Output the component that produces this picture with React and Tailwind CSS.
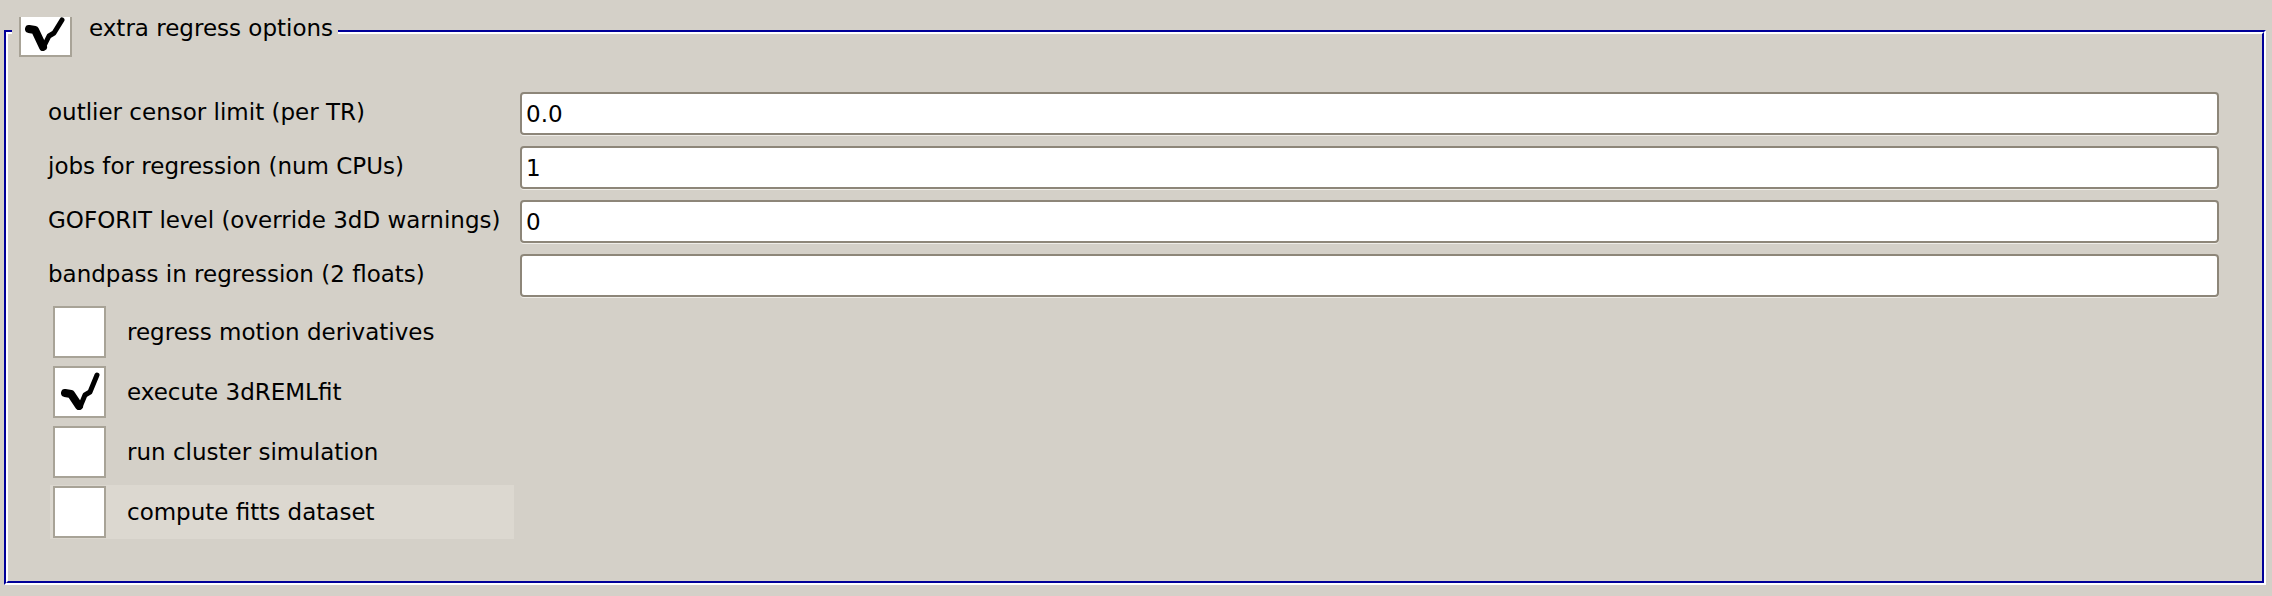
import React from 'react';

// Hand-drawn looking check mark used by the old-style checkboxes
const CheckMark = ({ small = false }) => {
  if (small) {
    return (
      <svg viewBox="0 0 49 38" className="w-full h-full blur-[0.6px]">
        <path d="M8 12 L14 13 L22 30" stroke="#000" strokeWidth="8" strokeLinecap="round" strokeLinejoin="round" fill="none" />
        <path d="M22 31 L28 19 L33 16 L41 3" stroke="#000" strokeWidth="5" strokeLinecap="round" strokeLinejoin="round" fill="none" />
      </svg>
    );
  }
  return (
    <svg viewBox="0 0 49 48" className="w-full h-full blur-[0.6px]">
      <path d="M10 25 L16 26 L24 38" stroke="#000" strokeWidth="8" strokeLinecap="round" strokeLinejoin="round" fill="none" />
      <path d="M25 39 L30 27 L35 24 L42 7" stroke="#000" strokeWidth="5" strokeLinecap="round" strokeLinejoin="round" fill="none" />
    </svg>
  );
};

const fields = [
  { label: 'outlier censor limit (per TR)', value: '0.0' },
  { label: 'jobs for regression (num CPUs)', value: '1' },
  { label: 'GOFORIT level (override 3dD warnings)', value: '0' },
  { label: 'bandpass in regression (2 floats)', value: '' },
];

const options = [
  { label: 'regress motion derivatives', checked: false },
  { label: 'execute 3dREMLfit', checked: true },
  { label: 'run cluster simulation', checked: false },
  { label: 'compute fitts dataset', checked: false, hover: true },
];

const App = () => {
  return (
    <div className="w-[2272px] h-[596px] bg-[#d4d0c8] pt-[30px] pl-[4px] text-[23px] leading-[27px] text-black font-['DejaVu_Sans',sans-serif]">
      <div className="relative w-[2262px] h-[555px]">
        {/* etched blue / white frame */}
        <div className="h-full border-2 border-t-[#000099] border-l-[#000099] border-r-white border-b-white">
          <div className="h-full border-2 border-t-white border-l-white border-r-[#000099] border-b-[#000099] pl-[40px] pr-[43px] pt-[58px]">
            <div className="grid grid-cols-[472px_1fr] gap-y-[11px]">
              {fields.map((f) => (
                <React.Fragment key={f.label}>
                  <div className="h-[43px] flex items-center pb-[3px] whitespace-nowrap">{f.label}</div>
                  <input
                    readOnly
                    value={f.value}
                    className="h-[43px] w-full bg-white border-2 border-[#8d8679] rounded-[4px] pl-[4px] outline-none shadow-[0_1px_0_#efede8]"
                  />
                </React.Fragment>
              ))}
            </div>

            <div className="mt-[8px] ml-[2px] flex flex-col gap-[6px]">
              {options.map((o) => (
                <div
                  key={o.label}
                  className={
                    'w-[464px] h-[54px] pl-[3px] flex items-center gap-[21px] ' +
                    (o.hover ? 'bg-[#dcd8d0]' : '')
                  }
                >
                  <div className="w-[53px] h-[52px] shrink-0 bg-white border-2 border-[#a8a397]">
                    {o.checked && <CheckMark />}
                  </div>
                  <span className="whitespace-nowrap">{o.label}</span>
                </div>
              ))}
            </div>
          </div>
        </div>

        {/* legend sitting on top of the frame line */}
        <div className="absolute left-[8px] top-[-15px] bg-[#d4d0c8] pl-[7px] pr-[5px] flex items-start gap-[17px]">
          <div className="w-[53px] h-[40px] mt-[2px] bg-white border-l-2 border-r-2 border-b-2 border-[#a8a397]">
            <CheckMark small />
          </div>
          <span className="whitespace-nowrap">extra regress options</span>
        </div>
      </div>
    </div>
  );
};

export default App;
